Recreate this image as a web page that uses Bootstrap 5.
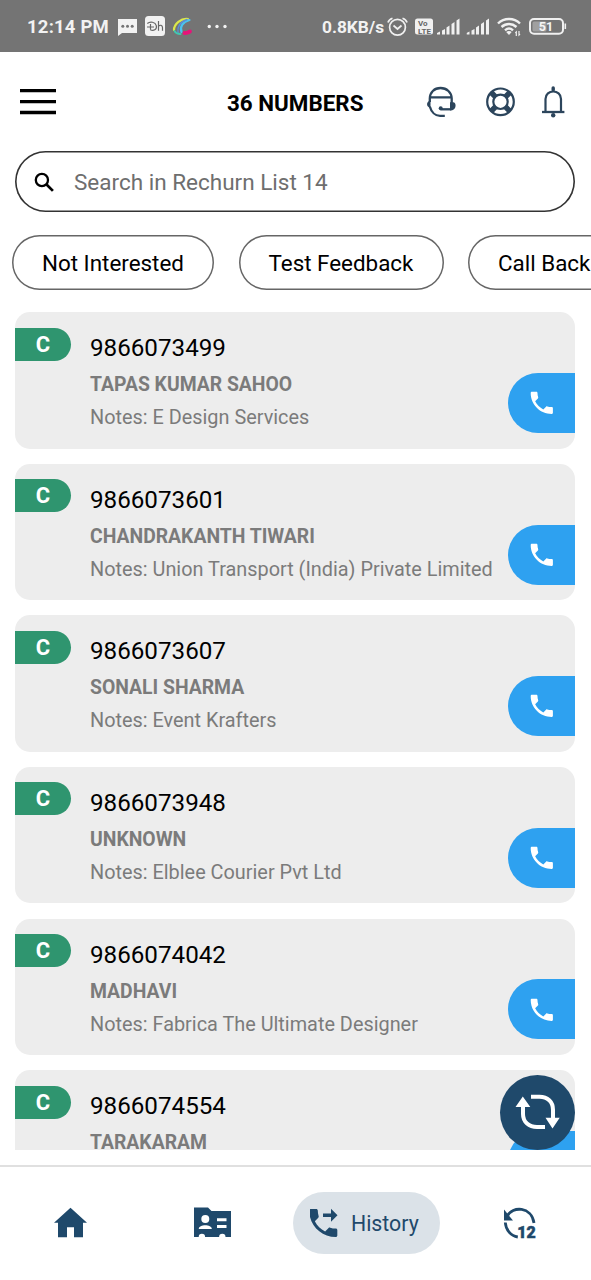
<!DOCTYPE html>
<html lang="en">
<head>
<meta charset="utf-8">
<meta name="viewport" content="width=device-width, initial-scale=1">
<title>36 Numbers</title>
<link href="https://cdn.jsdelivr.net/npm/bootstrap@5.3.0/dist/css/bootstrap.min.css" rel="stylesheet">
<style>
  body { font-family: Roboto, sans-serif; height: 1280px; background: #fff; color: #000; }
  svg { display: block; flex: none; }
  .status-bar { height: 52px; background: #747474; color: #f2f2f2; flex: none; font-size: 18px; font-weight: 700; line-height: 54px; padding-left: 27px; white-space: nowrap; }
  .clock { width: 91px; font-size: 18.5px; letter-spacing: .2px; padding-top: 1px; }
  .speed { margin-left: 95px; width: 65px; font-size: 17.3px; padding-top: 1px; }
  .top-bar { height: 99px; flex: none; padding-left: 20px; }
  .screen-title { font-size: 22.4px; font-weight: 700; margin-left: 171px; width: 200px; line-height: 30px; margin-top: 3px; }
  .search-box { margin: 0 16px 0 15px; height: 61px; flex: none; box-shadow: inset 0 0 0 1.6px #333; border-radius: 31px; padding: 2px 0 0 18px; color: #6e6e6e; font-size: 22.5px; }
  .chips { margin: 23px 0 0 12px; height: 54.5px; gap: 24.5px; flex: none; }
  .chip { flex: none; box-shadow: inset 0 0 0 1.5px #666; border-radius: 28px; font-size: 22.4px; line-height: 54px; padding: 1px 0 0 30px; white-space: nowrap; }
  .contacts { margin: 22.7px 15.6px 0 15px; height: 838px; gap: 15.2px; flex: none; }
  .contact { height: 136.4px; flex: none; background: #ededed; border-radius: 15px; padding: 17px 0 0 75px; }
  .grade { left: 0; top: 15.5px; width: 56px; height: 33px; background: #2f956f; color: #fff; font-size: 22px; font-weight: 700; line-height: 34px; border-radius: 0 17px 17px 0; }
  .phone-no { font-size: 24.2px; line-height: 38px; }
  .who { font-size: 19.35px; line-height: 35px; font-weight: 700; color: #7b7b7b; }
  .notes { font-size: 19.87px; line-height: 32px; color: #7b7b7b; white-space: nowrap; }
  .call { right: 0; top: 60.8px; width: 67.5px; height: 60px; background: #2ea1f0; border-radius: 30px 0 0 30px; padding-left: 19px; }
  .fab { right: 0; bottom: 0; width: 75.5px; height: 75.5px; background: #1f496b; }
  .tab-bar { margin-top: 15px; border-top: 2px solid #e0e0e0; flex: 1; color: #1f496b; padding: 25px 0 0 54px; }
  .tab-active { width: 147px; height: 62px; margin-left: 62px; border-radius: 31px; background: #dbe2e8; font-size: 21.3px; padding-left: 17px; }
  .tab-active span { padding-top: 2px; }
</style>
</head>
<body class="d-flex flex-column overflow-hidden m-0">
<svg width="0" height="0" class="position-absolute">
  <symbol id="phone" viewBox="0 0 24 24"><path fill="currentColor" d="M6.620 10.790c1.440 2.830 3.760 5.140 6.590 6.590l2.200-2.200c.27-.27.67-.36 1.020-.24 1.120.37 2.330.57 3.570.57.55 0 1 .45 1 1V20c0 .55-.45 1-1 1-9.390 0-17-7.610-17-17 0-.55.45-1 1-1h3.500c.55 0 1 .45 1 1 0 1.250.2 2.450.57 3.570.11.35.03.74-.25 1.020l-2.200 2.200z"/></symbol>
  <symbol id="signal" viewBox="0 0 23 17"><path fill="#f0f0f0" d="M0 16.500v-1.500l3-1.500v3zM5 12.500l3-1.500v5.500h-3zM9.500 9.500l3-2v9h-3zM14.500 6l3-2v12.500h-3zM19.500 2.500l3-2v16h-3z"/></symbol>
</svg>

<header class="status-bar d-flex align-items-center">
  <span class="clock">12:14 PM</span>
  <svg width="120" height="52" viewBox="118 0 120 52">
    <path fill="#f2f2f2" d="M118 19h19v14h-15l-4 3z"/>
    <g fill="#747474"><circle cx="122.800" cy="26.300" r="1.500"/><circle cx="127.500" cy="26.300" r="1.500"/><circle cx="132.200" cy="26.300" r="1.500"/></g>
    <rect x="145" y="16" width="20" height="20" rx="3.500" fill="#f2f2f2"/>
    <g fill="none" stroke="#666" stroke-width="1.200"><path d="M147.300 23.500c3-2.500 8-1.500 9 2.200 1 4-3 5.500-6 4M147 27h7M150.500 24v5.500M158.500 21v9.700M158.500 26.500c1.500-2 4-1.500 4 1v3.200"/></g>
    <g fill="none" stroke-linecap="round"><path stroke="#dce84a" stroke-width="2.200" d="M188 19c-7-1-14 5-14 11"/><path stroke="#4ac4ef" stroke-width="2.200" d="M189.500 20c-7 2-10 7-8 12"/><path stroke="#5b8fd8" stroke-width="1.500" d="M187 19.500c-7 2-10 8-9 13"/><path stroke="#40c8b0" stroke-width="1.800" d="M174.500 31c1 2 3 3 6 3"/><path stroke="#e6147a" stroke-width="3.800" d="M184.500 33c2 .3 3.800-.5 5.500-1.500"/></g>
    <g fill="#f2f2f2"><circle cx="209.300" cy="26.500" r="1.700"/><circle cx="217" cy="26.500" r="1.700"/><circle cx="225" cy="26.500" r="1.700"/></g>
  </svg>
  <span class="speed ms-auto">0.8KB/s</span>
  <svg width="21" height="52" viewBox="0 0 21 52" fill="none" stroke="#f0f0f0" stroke-width="1.700"><circle cx="10.500" cy="27.300" r="7.900"/><path d="M6.500 25.500l4 3.500 4-3.500M1 22.500c.5-2 2-3.500 4.500-4.300M20 22.500c-.5-2-2-3.500-4.500-4.300"/></svg>
  <svg width="183" height="52" viewBox="408 0 183 52">
    <rect x="415" y="18.500" width="18" height="16" rx="2.500" fill="#f0f0f0"/>
    <g font-family="Roboto, sans-serif" font-weight="700" fill="#666"><text x="418" y="26" font-size="8">Vo</text><text x="418" y="33.800" font-size="8" textLength="13">LTE</text></g>
    <use href="#signal" x="437" y="18" width="23" height="17"/>
    <use href="#signal" x="466.500" y="18" width="23" height="17"/>
    <g fill="none" stroke="#f0f0f0" stroke-width="2.400"><path d="M498 23.500c6-6 16-6 22 0M501.500 27c4.500-4 10.500-4 15 0M505 30.300c2.500-2.300 5.500-2.300 8 0"/></g>
    <path fill="#f0f0f0" d="M506.200 32c1.500-1.200 4-1.200 5.500 0l-2.700 3z"/>
    <path fill="none" stroke="#f0f0f0" stroke-width="1.200" d="M516.300 36v-4l-1 1M519 31v4l1-1"/>
    <rect x="530" y="19" width="33" height="14.800" rx="4" fill="none" stroke="#f0f0f0" stroke-width="2"/>
    <rect x="532.500" y="21.500" width="14" height="10" rx="1.500" fill="#a0a0a0"/>
    <path stroke="#f0f0f0" stroke-width="1.600" d="M565.300 23.500v5.500"/>
    <text x="546" y="31" font-family="Roboto, sans-serif" font-weight="700" font-size="12.500" text-anchor="middle" fill="#f5f5f5">51</text>
  </svg>
</header>

<nav class="top-bar d-flex align-items-center">
  <svg width="36" height="26" viewBox="0 0 36 26"><path stroke="#000" stroke-width="3.300" d="M0 1.700h36M0 12.700h36M0 23.500h36"/></svg>
  <h1 class="screen-title mb-0">36 NUMBERS</h1>
  <svg width="164" height="40" viewBox="427 82 164 40" fill="none" stroke="#2c455c">
    <g stroke-width="2.300"><path d="M429.800 102v-3.500c0-6 4.500-10.500 10.700-10.500s11.200 4.500 11.200 10.500v5M429.500 97.300h22.500M429.800 106.500c1.500 5.500 5.500 9.400 10.200 9.400h4.800"/><path d="M440.500 109.300h11"/></g>
    <path fill="#2c455c" stroke="none" d="M430.500 100.800v6.800c-4.600-.3-4.600-6.500 0-6.800zM450 102.200h3.200c3 0 3 5.500.8 7-1 .8-2.200 1.200-4 1.200z"/><circle cx="440.700" cy="108.200" r="2" fill="#2c455c" stroke="none"/>
    <g><circle cx="500.500" cy="101.800" r="13.300" stroke-width="2.200"/><circle cx="500.500" cy="101.800" r="7.200" stroke-width="2.200"/><path stroke-width="5.500" d="M491.200 92.500l4.600 4.600M509.800 92.500l-4.600 4.600M491.200 111.100l4.600-4.600M509.800 111.100l-4.600-4.600"/></g>
    <g><path stroke-width="2.200" d="M545.500 112V99c0-10 15.500-10 15.500 0v13"/><path stroke-width="2.300" d="M542 112h22.400"/><path stroke-width="3.400" stroke-linecap="round" d="M553.200 88v2"/><circle cx="553.200" cy="115.300" r="2.200" fill="#2c455c" stroke="none"/></g>
  </svg>
</nav>

<div class="search-box d-flex align-items-center">
  <svg width="41" height="26" viewBox="0 0 41 26" fill="none" stroke="#000"><circle cx="8.900" cy="10" r="6.100" stroke-width="2.300"/><path stroke-width="2.700" d="M13.300 14.300l6.600 6.600"/></svg>
  <span>Search in Rechurn List 14</span>
</div>

<div class="chips d-flex overflow-hidden">
  <div class="chip" style="width:202px">Not Interested</div>
  <div class="chip" style="width:205px">Test Feedback</div>
  <div class="chip" style="width:202px">Call Back</div>
</div>

<main class="contacts d-flex flex-column overflow-hidden position-relative">
  <div class="contact position-relative"><span class="grade position-absolute text-center">C</span><div class="phone-no">9866073499</div><div class="who">TAPAS KUMAR SAHOO</div><div class="notes">Notes: E Design Services</div><div class="call position-absolute d-flex align-items-center text-white"><svg width="29.600" height="29.600"><use href="#phone"/></svg></div></div>
  <div class="contact position-relative"><span class="grade position-absolute text-center">C</span><div class="phone-no">9866073601</div><div class="who">CHANDRAKANTH TIWARI</div><div class="notes">Notes: Union Transport (India) Private Limited</div><div class="call position-absolute d-flex align-items-center text-white"><svg width="29.600" height="29.600"><use href="#phone"/></svg></div></div>
  <div class="contact position-relative"><span class="grade position-absolute text-center">C</span><div class="phone-no">9866073607</div><div class="who">SONALI SHARMA</div><div class="notes">Notes: Event Krafters</div><div class="call position-absolute d-flex align-items-center text-white"><svg width="29.600" height="29.600"><use href="#phone"/></svg></div></div>
  <div class="contact position-relative"><span class="grade position-absolute text-center">C</span><div class="phone-no">9866073948</div><div class="who">UNKNOWN</div><div class="notes">Notes: Elblee Courier Pvt Ltd</div><div class="call position-absolute d-flex align-items-center text-white"><svg width="29.600" height="29.600"><use href="#phone"/></svg></div></div>
  <div class="contact position-relative"><span class="grade position-absolute text-center">C</span><div class="phone-no">9866074042</div><div class="who">MADHAVI</div><div class="notes">Notes: Fabrica The Ultimate Designer</div><div class="call position-absolute d-flex align-items-center text-white"><svg width="29.600" height="29.600"><use href="#phone"/></svg></div></div>
  <div class="contact position-relative"><span class="grade position-absolute text-center">C</span><div class="phone-no">9866074554</div><div class="who">TARAKARAM</div><div class="call position-absolute"></div></div>
  <div class="fab position-absolute rounded-circle d-flex align-items-center justify-content-center">
    <svg width="46" height="36" viewBox="515 1094 46 36"><path fill="none" stroke="#fff" stroke-width="4" d="M531 1096.800h8.500c8 0 13.500 5 13.500 13v9M545 1127h-8c-8 0-14-5-14-13v-10"/><path fill="#fff" d="M515.500 1107l7.300-10.500 7.500 10.500zM545.500 1117.800h14.200l-7.200 10.700z"/></svg>
  </div>
</main>

<footer class="tab-bar d-flex align-items-start">
  <svg width="33" height="62" viewBox="54 1192 33 62"><path fill="#1f496b" d="M54 1222.700l16.500-15 16.500 15h-4v14.500h-9v-10h-7v10h-9v-14.500z"/></svg>
  <svg width="37" height="62" viewBox="194 1192 37 62" style="margin-left:107px"><path fill="#1f496b" d="M194 1207.500h14l3.500 3.500H231v26h-5.500a3.200 3.200 0 0 0-6.400 0h-14a3.200 3.200 0 0 0-6.400 0H194z"/><g fill="#fff"><circle cx="205.300" cy="1219" r="4"/><path d="M198.800 1229c0-5 13-5 13 0zM217 1218.200h9.500v3h-9.500zM217 1225h9.500v3h-9.500z"/></g></svg>
  <div class="tab-active d-flex align-items-center">
    <svg width="41" height="62" viewBox="310 1192 41 62"><use href="#phone" x="304.500" y="1204" width="37.500" height="37.500" transform="translate(0 .3)"/><path fill="#1f496b" d="M323 1213.500h8v-4.800l6.500 6.500-6.500 6.500v-4.800h-8z"/></svg>
    <span>History</span>
  </div>
  <svg width="38" height="62" viewBox="501 1192 38 62" style="margin-left:61px">
    <path fill="none" stroke="#1f496b" stroke-width="2.800" d="M507 1216.500c5.500-11 24.500-10 27 6.500M505.300 1222.500c.5 7.500 5.500 13.500 12.500 14.500"/><path fill="#1f496b" d="M504 1209.500v11h9z"/><text x="517.300" y="1238" font-family="Roboto, sans-serif" font-weight="900" font-size="16.500" textLength="18.500" lengthAdjust="spacingAndGlyphs" fill="#1f496b" stroke="#1f496b" stroke-width=".5">12</text>
  </svg>
</footer>
<script src="https://cdn.jsdelivr.net/npm/bootstrap@5.3.0/dist/js/bootstrap.bundle.min.js"></script>
</body>
</html>
